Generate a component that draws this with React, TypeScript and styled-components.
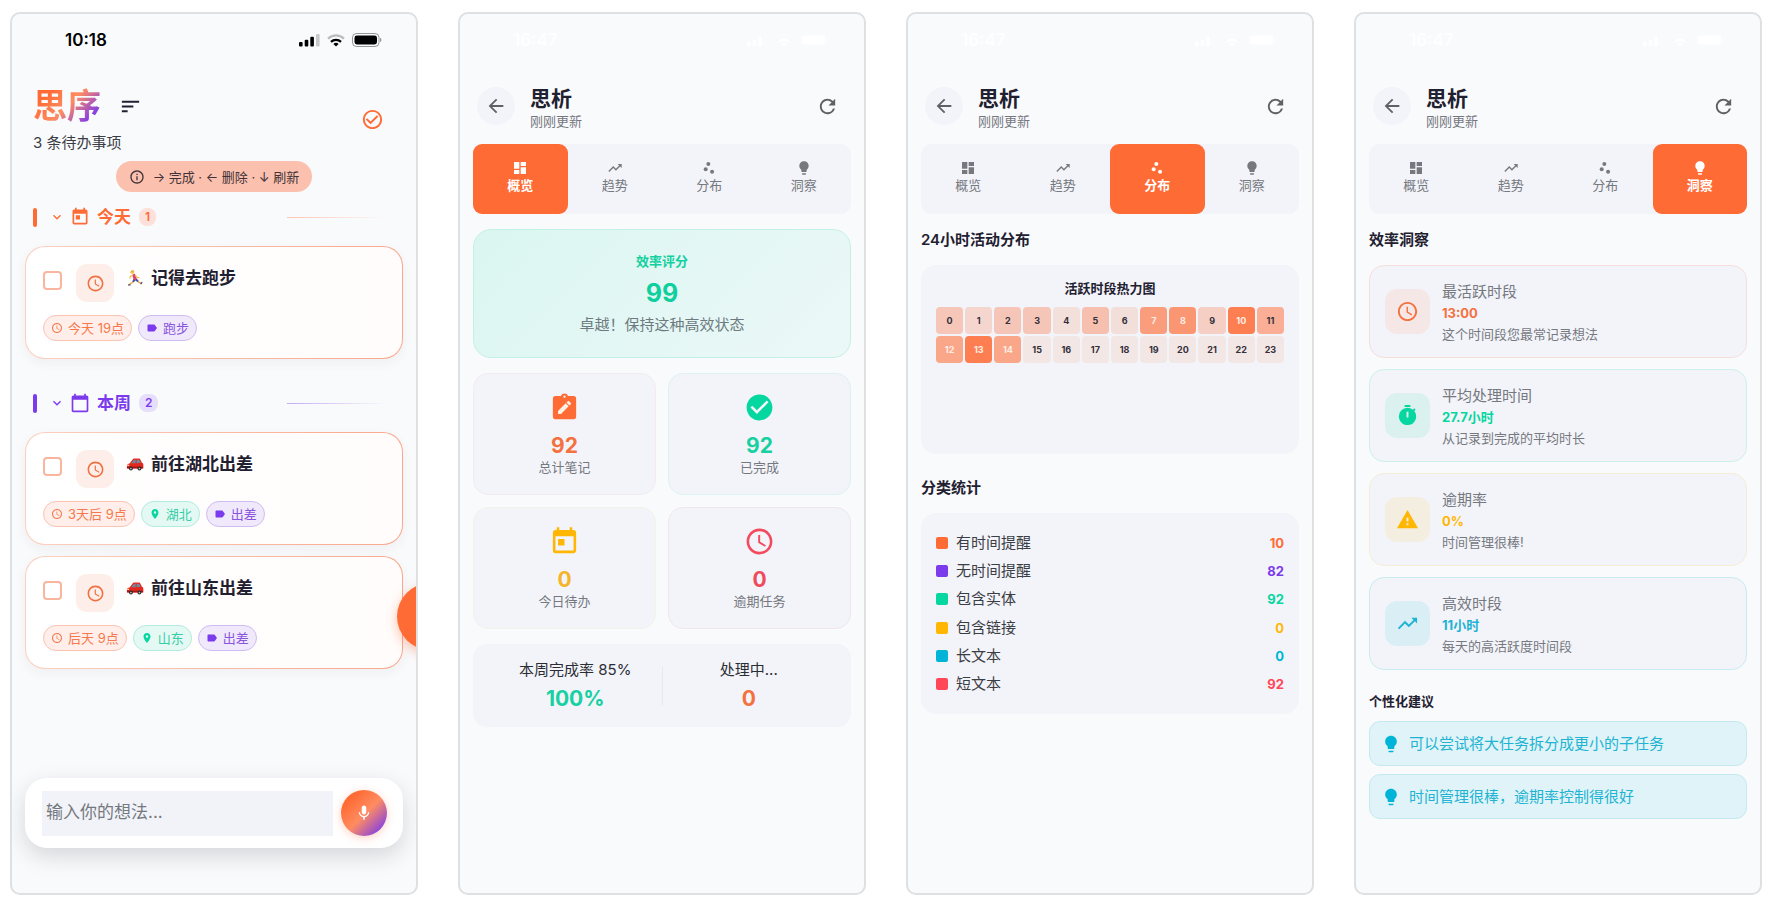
import React, { useState } from 'react';
import styled, { createGlobalStyle, css } from 'styled-components';
import {
  MdAccessTime,
  MdArrowBack,
  MdCalendarToday,
  MdCheckCircle,
  MdCheckCircleOutline,
  MdDashboard,
  MdExpandMore,
  MdInfoOutline,
  MdLabel,
  MdLightbulb,
  MdMic,
  MdPlace,
  MdRefresh,
  MdScatterPlot,
  MdSort,
  MdTimer,
  MdToday,
  MdTrendingUp,
  MdWarning,
} from 'react-icons/md';
import type { IconType } from 'react-icons';

const c = {
  orange: '#ff6b35',
  purple: '#7c3aed',
  green: '#06d6a0',
  yellow: '#ffb703',
  cyan: '#00b4d8',
  red: '#ff4757',
  ink: '#1f2030',
  text: '#3b3d45',
  muted: '#75787f',
  surface: '#f3f4f9',
  page: '#f9fafc',
};

const GlobalStyle = createGlobalStyle`
  *, *::before, *::after { box-sizing: border-box; }
  body {
    margin: 0;
    background: #ffffff;
    color: ${c.ink};
    font-family: Inter, "Noto Sans CJK SC", sans-serif;
    font-size: 15px;
    line-height: 20px;
  }
  h1, h2, h3, p, ul, ol { margin: 0; padding: 0; }
  ul, ol { list-style: none; }
  button, input { font: inherit; border: 0; padding: 0; margin: 0; }
  button { background: none; color: inherit; cursor: pointer; }
  svg { display: block; flex: none; }
`;

/* ---------- phone frame ---------- */

const Board = styled.main`
  display: grid;
  grid-template-columns: repeat(auto-fit, minmax(340px, 1fr));
  gap: 40px;
  min-height: 100vh;
  padding: 12px 14px 13px 10px;
`;

const Phone = styled.section`
  position: relative;
  display: flex;
  flex-direction: column;
  min-width: 0;
  padding: 0 13px 45px;
  overflow: hidden;
  background: ${c.page};
  border: 2px solid #dfe0e3;
  border-radius: 10px;
`;

const StatusRow = styled.div<{ $light?: boolean }>`
  display: flex;
  align-items: center;
  justify-content: space-between;
  height: 52px;
  padding: 0 21px 0 40px;
  color: ${(p) => (p.$light ? '#ffffff' : '#000000')};
  font-size: 17px;
  font-weight: 600;
`;

const StatusIcons = styled.span`
  display: flex;
  align-items: center;
  gap: 7px;
`;

function StatusBar({ time, light }: { time: string; light?: boolean }) {
  return (
    <StatusRow $light={light}>
      <span>{time}</span>
      <StatusIcons>
        <svg width="21" height="14" viewBox="0 0 21 14" fill="currentColor">
          <rect x="0" y="9" width="3.6" height="4.6" rx="1" />
          <rect x="5.7" y="6.8" width="3.6" height="6.8" rx="1" />
          <rect x="11.3" y="3.8" width="3.6" height="9.8" rx="1" />
          <rect x="17" y="1" width="3.6" height="12.6" rx="1" opacity="0.2" />
        </svg>
        <svg width="18" height="13" viewBox="0 0 18 13" fill="none" stroke="currentColor">
          <path d="M1 4.6a11.6 11.6 0 0 1 16 0" strokeWidth="2.2" opacity="0.25" />
          <path d="M4 7.8a7.2 7.2 0 0 1 10 0" strokeWidth="2.3" />
          <path d="M9 12.6 6.4 10a3.8 3.8 0 0 1 5.2 0Z" fill="currentColor" stroke="none" />
        </svg>
        <svg width="30" height="14" viewBox="0 0 30 14">
          <rect x="0.5" y="0.5" width="26.5" height="13" rx="4" fill="none" stroke="currentColor" opacity="0.4" />
          <rect x="2.5" y="2.5" width="22.5" height="9" rx="2.4" fill="currentColor" />
          <path d="M28 4.8v4.4a2.4 2.4 0 0 0 0-4.4Z" fill="currentColor" opacity="0.4" />
        </svg>
      </StatusIcons>
    </StatusRow>
  );
}

/* ---------- task screen ---------- */

const HomeHeader = styled.header`
  display: flex;
  align-items: center;
  justify-content: space-between;
  margin-top: 20px;
  padding: 0 19px 0 8px;
`;

const TitleLine = styled.div`
  display: flex;
  align-items: center;
  gap: 18px;
`;

const Brand = styled.h1`
  font-size: 34px;
  line-height: 40px;
  font-weight: 600;
  color: transparent;
  background: linear-gradient(135deg, #ff6b35 20%, #ff8c61 50%, #7c3aed 85%);
  -webkit-background-clip: text;
  background-clip: text;
`;

const TodoCount = styled.p`
  margin-top: 7px;
  color: ${c.text};
`;

const IconButton = styled.button<{ $color: string }>`
  display: flex;
  color: ${(p) => p.$color};
`;

const Hint = styled.p`
  display: flex;
  align-items: center;
  align-self: center;
  gap: 8px;
  height: 31px;
  margin-top: 8px;
  padding: 0 13px;
  border-radius: 16px;
  background: #fbc1ae;
  color: #433338;
  font-size: 13px;
`;

const GroupHead = styled.div<{ $color: string; $first?: boolean }>`
  display: flex;
  align-items: center;
  height: 20px;
  margin: ${(p) => (p.$first ? '15px' : '34px')} 0 19px;
  padding: 0 16px 0 8px;
  color: ${(p) => p.$color};
`;

const GroupMark = styled.span`
  width: 4px;
  height: 19px;
  margin-right: 12px;
  border-radius: 2px;
  background: currentColor;
`;

const GroupTitle = styled.h2`
  margin: 0 8px 0 7px;
  font-size: 17px;
  font-weight: 600;
`;

const GroupCount = styled.span<{ $bg: string }>`
  padding: 0 6px;
  border-radius: 8px;
  background: ${(p) => p.$bg};
  font-size: 12px;
  font-weight: 600;
  line-height: 18px;
`;

const GroupRule = styled.span<{ $from: string }>`
  width: 100px;
  height: 1px;
  margin-left: auto;
  background: linear-gradient(90deg, ${(p) => p.$from}, transparent);
`;

const GroupToggle = styled.button`
  display: flex;
  align-items: center;
  gap: 5px;
`;

const TaskList = styled.ul`
  display: grid;
  gap: 11px;
`;

const TaskCard = styled.li`
  display: flex;
  flex-direction: column;
  justify-content: space-between;
  height: 113px;
  padding: 17px;
  border: 1px solid transparent;
  border-radius: 20px;
  background:
    linear-gradient(90deg, #ffffff, #fffcfb) padding-box,
    linear-gradient(90deg, #fbd0c0, #f9a88c) border-box;
  box-shadow: 0 4px 12px rgba(60, 40, 30, 0.05);
`;

const TaskTop = styled.div`
  display: flex;
  align-items: flex-start;
`;

const TaskCheck = styled.input`
  appearance: none;
  width: 19px;
  height: 19px;
  margin: 7px 14px 0 0;
  border: 2px solid #fab59f;
  border-radius: 4px;
  background: #ffffff;
  &:checked { background: ${c.orange}; }
`;

const TaskIcon = styled.span`
  display: grid;
  place-items: center;
  width: 38px;
  height: 38px;
  margin-right: 12px;
  border-radius: 11px;
  background: #feeeea;
  color: #f0703f;
`;

const TaskTitle = styled.label`
  display: flex;
  align-items: center;
  gap: 7px;
  margin-top: 4px;
  font-size: 17px;
  font-weight: 600;
`;

const ChipRow = styled.ul`
  display: flex;
  gap: 6px;
`;

type Tone = 'time' | 'place' | 'tag';

const tones: Record<Tone, { fg: string; icon: string; bg: string; line: string }> = {
  time: { fg: '#f5794d', icon: '#f5794d', bg: '#ffeee9', line: '#fac4b2' },
  place: { fg: '#35cda4', icon: '#06d6a0', bg: '#e5f9f4', line: '#b2ecdc' },
  tag: { fg: '#8a55dd', icon: '#7c3aed', bg: '#f0e9fb', line: '#cfbcf2' },
};

const ChipItem = styled.li<{ $tone: Tone }>`
  display: flex;
  align-items: center;
  gap: 5px;
  height: 26px;
  padding: 0 7px;
  border: 1px solid ${(p) => tones[p.$tone].line};
  border-radius: 13px;
  background: ${(p) => tones[p.$tone].bg};
  color: ${(p) => tones[p.$tone].fg};
  font-size: 13px;
  svg { color: ${(p) => tones[p.$tone].icon}; }
`;

const toneIcon: Record<Tone, IconType> = { time: MdAccessTime, place: MdPlace, tag: MdLabel };

function RunnerEmoji() {
  return (
    <svg width="18" height="18" viewBox="0 0 18 18" fill="none" strokeLinecap="round" strokeLinejoin="round">
      <path d="M8.2 10.6 6.6 13.4 3.4 15.4" stroke="#e8b04a" strokeWidth="1.5" />
      <path d="M10.2 10.8 12.4 13l2.6 1.4" stroke="#e8b04a" strokeWidth="1.5" />
      <path d="M8.6 10.2 7.6 12M9.6 10.2l1.8 1.6" stroke="#4653a0" strokeWidth="2.2" />
      <path d="M8 6.4 9 9.4" stroke="#e0416e" strokeWidth="3.2" />
      <path d="M6.6 6.2 4.4 7.4 3.8 9.2M9.6 6.4l1.2 2 2 .2" stroke="#f3bd55" strokeWidth="1.2" />
      <circle cx="6.4" cy="3.2" r="1.8" fill="#f6c453" />
      <path d="M4.8 3c.2-1.5 2.4-1.9 3.2-.8" stroke="#dca136" strokeWidth="1" />
      <path d="M2.6 15.9h1.4M15 14.6l.8-1" stroke="#4d4a78" strokeWidth="1.4" />
    </svg>
  );
}

function CarEmoji() {
  return (
    <svg width="18" height="18" viewBox="0 0 19 18">
      <path d="M1 11.2c0-1.6 1-2.4 2.8-2.7L7 4.2c.5-.7 1-.9 1.9-.9h4.4c.9 0 1.5.3 1.9 1.1l1.6 3.3c1 .4 1.5 1.2 1.5 2.3v3.3c0 .5-.3.8-.8.8H1.9c-.6 0-.9-.3-.9-.9Z" fill="#e5281f" />
      <path d="M5.6 8.3 8 5c.2-.4.5-.5 1-.5h1.2v3.6ZM11.2 4.5h1.9c.5 0 .8.2 1 .6l1.3 2.7-4.2.3Z" fill="#6d8ba0" />
      <path d="M1 11.8h16.9v1.3H1Z" fill="#9d1712" />
      <path d="M1.4 9.9h1.9v1.2H1.2Z" fill="#ffe08a" />
      <circle cx="5.2" cy="13.8" r="2.1" fill="#2b2b2e" />
      <circle cx="5.2" cy="13.8" r="0.9" fill="#b9bcc2" />
      <circle cx="14.2" cy="13.8" r="2.1" fill="#2b2b2e" />
      <circle cx="14.2" cy="13.8" r="0.9" fill="#b9bcc2" />
    </svg>
  );
}

interface Task {
  id: string;
  title: string;
  emoji: React.ReactNode;
  chips: [Tone, string][];
}

const today: Task[] = [
  { id: 'run', title: '记得去跑步', emoji: <RunnerEmoji />, chips: [['time', '今天 19点'], ['tag', '跑步']] },
];

const week: Task[] = [
  { id: 'hubei', title: '前往湖北出差', emoji: <CarEmoji />, chips: [['time', '3天后 9点'], ['place', '湖北'], ['tag', '出差']] },
  { id: 'shandong', title: '前往山东出差', emoji: <CarEmoji />, chips: [['time', '后天 9点'], ['place', '山东'], ['tag', '出差']] },
];

interface GroupProps {
  title: string;
  color: string;
  badge: string;
  rule: string;
  icon: React.ReactNode;
  tasks: Task[];
  first?: boolean;
}

function TaskGroup({ title, color, badge, rule, icon, tasks, first }: GroupProps) {
  const [open, setOpen] = useState(true);
  return (
    <>
      <GroupHead $color={color} $first={first}>
        <GroupMark />
        <GroupToggle type="button" aria-label={title} aria-expanded={open} onClick={() => setOpen(!open)}>
          <MdExpandMore size={16} />
          {icon}
        </GroupToggle>
        <GroupTitle>{title}</GroupTitle>
        <GroupCount $bg={badge}>{tasks.length}</GroupCount>
        <GroupRule $from={rule} />
      </GroupHead>
      {open && (
        <TaskList>
          {tasks.map((t) => (
            <TaskCard key={t.id}>
              <TaskTop>
                <TaskCheck type="checkbox" id={t.id} />
                <TaskIcon><MdAccessTime size={19} /></TaskIcon>
                <TaskTitle htmlFor={t.id}>{t.emoji}{t.title}</TaskTitle>
              </TaskTop>
              <ChipRow>
                {t.chips.map(([tone, label]) => {
                  const Icon = toneIcon[tone];
                  return <ChipItem key={label} $tone={tone}><Icon size={12} />{label}</ChipItem>;
                })}
              </ChipRow>
            </TaskCard>
          ))}
        </TaskList>
      )}
    </>
  );
}

const Fab = styled.button`
  position: absolute;
  right: -48px;
  bottom: 243px;
  width: 67px;
  height: 67px;
  border-radius: 50%;
  background: ${c.orange};
  box-shadow: 0 4px 12px rgba(255, 107, 53, 0.4);
`;

const Composer = styled.form`
  display: flex;
  align-items: center;
  gap: 8px;
  height: 70px;
  margin-top: auto;
  padding: 0 16px 0 17px;
  border-radius: 22px;
  background: #ffffff;
  box-shadow: 0 8px 22px rgba(30, 32, 40, 0.16);
`;

const ComposerInput = styled.input`
  flex: 1;
  min-width: 0;
  height: 45px;
  padding: 0 4px 2px;
  background: #f1f3f8;
  font-size: 17px;
  outline: none;
  &::placeholder { color: ${c.muted}; opacity: 1; }
`;

const MicButton = styled.button`
  display: grid;
  place-items: center;
  width: 46px;
  height: 46px;
  border-radius: 50%;
  background: linear-gradient(135deg, #ff6b35 20%, #ff8c61 52%, #7c3aed 92%);
  box-shadow: 0 2px 8px rgba(255, 107, 53, 0.3);
  color: #ffffff;
`;

function HomeScreen() {
  return (
    <Phone aria-label="思序">
      <StatusBar time="10:18" />
      <HomeHeader>
        <div>
          <TitleLine>
            <Brand>思序</Brand>
            <IconButton type="button" aria-label="排序" $color={c.ink}><MdSort size={23} /></IconButton>
          </TitleLine>
          <TodoCount>3 条待办事项</TodoCount>
        </div>
        <IconButton type="button" aria-label="已完成" $color={c.orange}><MdCheckCircleOutline size={23} /></IconButton>
      </HomeHeader>
      <Hint><MdInfoOutline size={16} />→ 完成 · ← 删除 · ↓ 刷新</Hint>
      <TaskGroup first title="今天" color={c.orange} badge="#fde0d9" rule="#ffc4b0" icon={<MdToday size={20} />} tasks={today} />
      <TaskGroup title="本周" color={c.purple} badge="#e7defb" rule="#c4adf5" icon={<MdCalendarToday size={20} />} tasks={week} />
      <Fab type="button" aria-label="新建" />
      <Composer onSubmit={(e) => e.preventDefault()}>
        <ComposerInput type="text" aria-label="输入你的想法" placeholder="输入你的想法..." />
        <MicButton type="button" aria-label="语音输入"><MdMic size={18} /></MicButton>
      </Composer>
    </Phone>
  );
}

/* ---------- analysis screens ---------- */

const AnalysisHead = styled.header`
  display: flex;
  align-items: center;
  height: 44px;
  margin: 18px 0 16px;
  padding: 0 12px 0 4px;
`;

const BackButton = styled.button`
  display: grid;
  place-items: center;
  width: 38px;
  height: 38px;
  margin-right: 15px;
  border-radius: 50%;
  background: ${c.surface};
  color: #5f6167;
`;

const AnalysisTitle = styled.h1`
  font-size: 21px;
  font-weight: 600;
  line-height: 28px;
`;

const Updated = styled.p`
  color: ${c.muted};
  font-size: 13px;
  line-height: 16px;
`;

const HeadText = styled.div`
  flex: 1;
  padding-top: 1px;
`;

const TabBar = styled.div`
  display: grid;
  grid-template-columns: repeat(4, 1fr);
  height: 70px;
  margin-bottom: 15px;
  border-radius: 11px;
  background: ${c.surface};
`;

const Tab = styled.button<{ $active: boolean }>`
  display: flex;
  flex-direction: column;
  align-items: center;
  padding-top: 16px;
  border-radius: 9px;
  color: ${c.muted};
  font-size: 13px;
  line-height: 18px;
  ${(p) => p.$active && css`
    background: ${c.orange};
    color: #ffffff;
    font-weight: 600;
  `}
`;

const tabs: [string, IconType][] = [
  ['概览', MdDashboard],
  ['趋势', MdTrendingUp],
  ['分布', MdScatterPlot],
  ['洞察', MdLightbulb],
];

function AnalysisScreen({ active, children }: { active: string; children: React.ReactNode }) {
  return (
    <Phone aria-label={`思析 ${active}`}>
      <StatusBar time="16:47" light />
      <AnalysisHead>
        <BackButton type="button" aria-label="返回"><MdArrowBack size={22} /></BackButton>
        <HeadText>
          <AnalysisTitle>思析</AnalysisTitle>
          <Updated>刚刚更新</Updated>
        </HeadText>
        <IconButton type="button" aria-label="刷新" $color="#5f6167"><MdRefresh size={23} /></IconButton>
      </AnalysisHead>
      <TabBar role="tablist">
        {tabs.map(([label, Icon]) => (
          <Tab key={label} type="button" role="tab" aria-selected={label === active} $active={label === active}>
            <Icon size={16} />
            {label}
          </Tab>
        ))}
      </TabBar>
      {children}
    </Phone>
  );
}

const ScoreCard = styled.div`
  display: flex;
  flex-direction: column;
  align-items: center;
  height: 129px;
  padding-top: 21px;
  border: 1px solid #c3f0e4;
  border-radius: 18px;
  background: linear-gradient(135deg, #daf6f0, #ecf8f8);
`;

const ScoreLabel = styled.h2`
  color: #12d0a0;
  font-size: 13px;
  font-weight: 600;
`;

const ScoreValue = styled.p`
  margin: 6px 0;
  color: #10cf9f;
  font-size: 25px;
  font-weight: 700;
  line-height: 32px;
`;

const ScoreText = styled.p`
  color: #6d7b80;
`;

const StatGrid = styled.ul`
  display: grid;
  grid-template-columns: 1fr 1fr;
  gap: 12px;
  margin: 15px 0;
`;

const StatCard = styled.li<{ $line: string }>`
  display: flex;
  flex-direction: column;
  align-items: center;
  height: 122px;
  padding-top: 18px;
  border: 1px solid ${(p) => p.$line};
  border-radius: 15px;
  background: ${c.surface};
`;

const StatValue = styled.strong<{ $color: string }>`
  color: ${(p) => p.$color};
  font-size: 21px;
  font-weight: 700;
  line-height: 26px;
`;

const StatIcon = styled.span<{ $color: string }>`
  margin-bottom: 10px;
  color: ${(p) => p.$color};
`;

const StatLabel = styled.span`
  color: ${c.muted};
  font-size: 13px;
  line-height: 16px;
`;

const SummaryRow = styled.div`
  display: flex;
  align-items: center;
  height: 83px;
  padding: 0 16px;
  border-radius: 14px;
  background: ${c.surface};
`;

const SummaryCell = styled.div`
  display: flex;
  flex: 1;
  flex-direction: column;
  align-items: center;
  gap: 6px;
  color: #2b2d35;
`;

const SummaryDivider = styled.span`
  width: 1px;
  height: 38px;
  background: #e6e8ee;
`;

function ClipboardEdit({ size }: { size: number }) {
  return (
    <svg width={size} height={size} viewBox="0 0 24 24" fill="currentColor">
      <path
        fillRule="evenodd"
        d="M19 3h-4.2a3 3 0 0 0-5.6 0H5a2 2 0 0 0-2 2v14a2 2 0 0 0 2 2h14a2 2 0 0 0 2-2V5a2 2 0 0 0-2-2Zm-7-.3a.9.9 0 1 1 0 1.8.9.9 0 0 1 0-1.8Z"
      />
      <path d="M7 17v-2.3l5.9-5.9 2.3 2.3L9.3 17Zm9.9-7.6-1.1 1.1-2.3-2.3 1.1-1.1a.6.6 0 0 1 .9 0l1.4 1.4c.3.3.3.6 0 .9Z" fill="#fff3e6" />
    </svg>
  );
}

const stats = [
  { label: '总计笔记', value: 92, color: '#f4713f', iconColor: c.orange, line: '#f3ebef', icon: <ClipboardEdit size={31} /> },
  { label: '已完成', value: 92, color: '#18d0a2', iconColor: c.green, line: '#dcf2f3', icon: <MdCheckCircle size={31} /> },
  { label: '今日待办', value: 0, color: '#f5b52a', iconColor: c.yellow, line: '#f3f1ea', icon: <MdToday size={31} /> },
  { label: '逾期任务', value: 0, color: '#ef4a5e', iconColor: '#f24a5e', line: '#f1e6ee', icon: <MdAccessTime size={31} /> },
];

const SectionTitle = styled.h2<{ $small?: boolean; $next?: boolean }>`
  margin: ${(p) => (p.$next ? '23px' : '0')} 0 14px;
  font-size: 15px;
  font-weight: 600;
  line-height: 22px;
  ${(p) => p.$small && css`
    margin: 20px 0 9px;
    font-size: 13px;
  `}
`;

const HeatPanel = styled.div`
  min-height: 189px;
  padding: 13px 15px;
  border-radius: 15px;
  background: ${c.surface};
`;

const HeatTitle = styled.h3`
  margin-bottom: 9px;
  font-size: 13px;
  font-weight: 600;
  text-align: center;
`;

const HeatGrid = styled.ol`
  display: grid;
  grid-template-columns: repeat(12, 1fr);
  gap: 2px;
`;

const HeatCell = styled.li<{ $bg: string; $hot: boolean }>`
  height: 27px;
  border-radius: 4px;
  background: ${(p) => p.$bg};
  color: ${(p) => (p.$hot ? '#ffeee6' : '#33303a')};
  font-size: 9px;
  font-weight: 700;
  line-height: 27px;
  text-align: center;
`;

const heat = [
  '#f6c6b8', '#f4d6cf', '#f5c6b8', '#f5c6b8', '#f3e0da', '#f6bfae', '#f3dfda', '#fa9d7d',
  '#fb9673', '#f5cfc4', '#fd7e50', '#f9ae95', '#faa688', '#fd7e50', '#faa688',
];
const hotHours = [7, 8, 10, 12, 13, 14];
const hours = Array.from({ length: 24 }, (_, h) => h);

const CategoryList = styled.ul`
  display: flex;
  flex-direction: column;
  justify-content: space-between;
  height: 201px;
  padding: 16px 15px;
  border-radius: 15px;
  background: ${c.surface};
`;

const CategoryRow = styled.li`
  display: flex;
  align-items: center;
  gap: 8px;
  height: 27px;
  color: ${c.text};
`;

const Swatch = styled.span<{ $color: string }>`
  width: 12px;
  height: 12px;
  border-radius: 2px;
  background: ${(p) => p.$color};
`;

const CategoryValue = styled.strong<{ $color: string }>`
  margin-left: auto;
  color: ${(p) => p.$color};
  font-size: 13px;
  font-weight: 700;
`;

const categories: [string, number, string][] = [
  ['有时间提醒', 10, c.orange],
  ['无时间提醒', 82, c.purple],
  ['包含实体', 92, c.green],
  ['包含链接', 0, c.yellow],
  ['长文本', 0, c.cyan],
  ['短文本', 92, c.red],
];

const InsightList = styled.ul`
  display: grid;
  gap: 11px;
`;

const InsightCard = styled.li<{ $line: string }>`
  display: flex;
  align-items: center;
  gap: 12px;
  height: 93px;
  padding: 0 16px 0 15px;
  border: 1px solid ${(p) => p.$line};
  border-radius: 15px;
  background: ${c.surface};
`;

const InsightIcon = styled.span<{ $bg: string; $color: string }>`
  display: grid;
  place-items: center;
  width: 45px;
  height: 45px;
  border-radius: 12px;
  background: ${(p) => p.$bg};
  color: ${(p) => p.$color};
`;

const InsightBody = styled.div`
  padding-top: 3px;
`;

const InsightTitle = styled.h3`
  color: ${c.muted};
  font-size: 15px;
  font-weight: 400;
  line-height: 22px;
`;

const InsightValue = styled.p<{ $color: string }>`
  color: ${(p) => p.$color};
  font-size: 13px;
  font-weight: 700;
  line-height: 21px;
`;

const InsightText = styled.p`
  color: ${c.muted};
  font-size: 13px;
  line-height: 21px;
`;

const insights = [
  { title: '最活跃时段', value: '13:00', text: '这个时间段您最常记录想法', color: '#f4713f', bg: '#f4e7e6', line: '#f6dedb', Icon: MdAccessTime },
  { title: '平均处理时间', value: '27.7小时', text: '从记录到完成的平均时长', color: '#06d6a0', bg: '#daf1f0', line: '#cdf0ea', Icon: MdTimer },
  { title: '逾期率', value: '0%', text: '时间管理很棒!', color: '#ffb703', bg: '#f3eee0', line: '#f6edd6', Icon: MdWarning },
  { title: '高效时段', value: '11小时', text: '每天的高活跃度时间段', color: '#1fb2d4', bg: '#daeef5', line: '#c9ebf2', Icon: MdTrendingUp },
];

const TipList = styled.ul`
  display: grid;
  gap: 8px;
`;

const Tip = styled.li`
  display: flex;
  align-items: center;
  gap: 8px;
  height: 45px;
  padding: 0 11px;
  border: 1px solid #c4e9f1;
  border-radius: 11px;
  background: #dff3f8;
  color: #22b3d2;
  svg { color: ${c.cyan}; }
`;

export default function App() {
  return (
    <>
      <GlobalStyle />
      <Board>
        <HomeScreen />

        <AnalysisScreen active="概览">
          <ScoreCard>
            <ScoreLabel>效率评分</ScoreLabel>
            <ScoreValue>99</ScoreValue>
            <ScoreText>卓越！保持这种高效状态</ScoreText>
          </ScoreCard>
          <StatGrid>
            {stats.map((s) => (
              <StatCard key={s.label} $line={s.line}>
                <StatIcon $color={s.iconColor}>{s.icon}</StatIcon>
                <StatValue $color={s.color}>{s.value}</StatValue>
                <StatLabel>{s.label}</StatLabel>
              </StatCard>
            ))}
          </StatGrid>
          <SummaryRow>
            <SummaryCell>
              <span>本周完成率 85%</span>
              <StatValue $color="#18d0a2">100%</StatValue>
            </SummaryCell>
            <SummaryDivider />
            <SummaryCell>
              <span>处理中...</span>
              <StatValue $color="#f4713f">0</StatValue>
            </SummaryCell>
          </SummaryRow>
        </AnalysisScreen>

        <AnalysisScreen active="分布">
          <SectionTitle>24小时活动分布</SectionTitle>
          <HeatPanel>
            <HeatTitle>活跃时段热力图</HeatTitle>
            <HeatGrid>
              {hours.map((h) => (
                <HeatCell key={h} $bg={heat[h] ?? '#f3e7e5'} $hot={hotHours.includes(h)}>{h}</HeatCell>
              ))}
            </HeatGrid>
          </HeatPanel>
          <SectionTitle $next>分类统计</SectionTitle>
          <CategoryList>
            {categories.map(([label, value, color]) => (
              <CategoryRow key={label}>
                <Swatch $color={color} />
                {label}
                <CategoryValue $color={color}>{value}</CategoryValue>
              </CategoryRow>
            ))}
          </CategoryList>
        </AnalysisScreen>

        <AnalysisScreen active="洞察">
          <SectionTitle>效率洞察</SectionTitle>
          <InsightList>
            {insights.map(({ title, value, text, color, bg, line, Icon }) => (
              <InsightCard key={title} $line={line}>
                <InsightIcon $bg={bg} $color={color}><Icon size={23} /></InsightIcon>
                <InsightBody>
                  <InsightTitle>{title}</InsightTitle>
                  <InsightValue $color={color}>{value}</InsightValue>
                  <InsightText>{text}</InsightText>
                </InsightBody>
              </InsightCard>
            ))}
          </InsightList>
          <SectionTitle $small>个性化建议</SectionTitle>
          <TipList>
            <Tip><MdLightbulb size={20} />可以尝试将大任务拆分成更小的子任务</Tip>
            <Tip><MdLightbulb size={20} />时间管理很棒，逾期率控制得很好</Tip>
          </TipList>
        </AnalysisScreen>
      </Board>
    </>
  );
}
